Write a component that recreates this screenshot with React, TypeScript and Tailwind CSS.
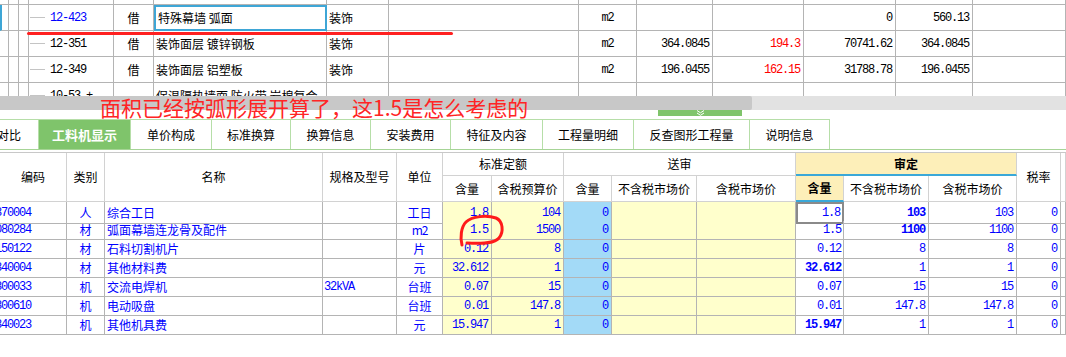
import React from 'react';

const cjk = "font-['Noto_Sans_CJK_SC',sans-serif]";
const mono = "font-['Liberation_Mono','Noto_Sans_CJK_SC',monospace] tracking-[-1.2px]";

const topCols = 'grid-cols-[9px_10px_10px_85px_40px_173px_62px_190px_58px_76px_91px_92px_77px_93px]';
const botCols = 'grid-cols-[67px_38px_218px_74px_46px_49px_72px_48px_85px_99px_48px_85px_88px_44px_5px]';

const tl = 'border-r border-b border-[#b4b4b4]';
const hl = 'border-r border-b border-[#d2d2d2]';

interface TopRowType {
  code?: string;
  blue?: boolean;
  jie?: string;
  name?: string;
  kind?: string;
  unit?: string;
  qty?: string;
  price?: string;
  sum?: string;
  val?: string;
  selected?: boolean;
}

const topRows: TopRowType[] = [
  { code: '12-423', blue: true, jie: '借', name: '特殊幕墙 弧面', kind: '装饰', unit: 'm2', sum: '0', val: '560.13', selected: true },
  { code: '12-351', jie: '借', name: '装饰面层 镀锌钢板', kind: '装饰', unit: 'm2', qty: '364.0845', price: '194.3', sum: '70741.62', val: '364.0845' },
  { code: '12-349', jie: '借', name: '装饰面层 铝塑板', kind: '装饰', unit: 'm2', qty: '196.0455', price: '162.15', sum: '31788.78', val: '196.0455' },
  { code: '10-53 +', jie: '....', name: '保温隔热墙面 防火带 岩棉复合' },
];

function TopRow({ r }: { r: TopRowType }) {
  const num = `${tl} flex items-center justify-end pr-[3px] text-[12px] ${mono}`;
  return (
    <div className={`grid ${topCols} h-[26px] text-black`}>
      <div className={`${tl} ${r.selected ? 'border-l-2 border-l-[#3ea6d6]' : ''}`} />
      <div className={tl} />
      <div className={tl} />
      <div className={`${tl} flex items-center text-[12px] ${mono}`}>
        <span className="ml-px h-px w-[15px] bg-[#c4c4c4]" />
        <span className={`ml-[5px] ${r.blue ? 'text-[#0000ff]' : ''}`}>{r.code}</span>
      </div>
      <div className={`${tl} flex items-center justify-center text-[12px] ${cjk}`}>{r.jie}</div>
      <div
        className={`flex items-center pl-[2px] text-[12px] whitespace-nowrap overflow-hidden ${cjk} ${
          r.selected ? 'border-2 border-[#3ea6d6]' : tl
        }`}
      >
        {r.name}
      </div>
      <div className={`${tl} flex items-center pl-[2px] text-[12px] ${cjk}`}>{r.kind}</div>
      <div className={tl} />
      <div className={`${tl} flex items-center justify-center text-[12px] ${mono}`}>{r.unit}</div>
      <div className={num}>{r.qty}</div>
      <div className={`${num} text-[#ff0000]`}>{r.price}</div>
      <div className={num}>{r.sum}</div>
      <div className={num}>{r.val}</div>
      <div className={tl} />
    </div>
  );
}

const tabs = [
  { label: '对比', w: 'w-[39px]', cut: true },
  { label: '工料机显示', w: 'w-[92px]', active: true },
  { label: '单价构成', w: 'w-[81px]' },
  { label: '标准换算', w: 'w-[79px]' },
  { label: '换算信息', w: 'w-[80px]' },
  { label: '安装费用', w: 'w-[80px]' },
  { label: '特征及内容', w: 'w-[92px]' },
  { label: '工程量明细', w: 'w-[91px]' },
  { label: '反查图形工程量', w: 'w-[116px]' },
  { label: '说明信息', w: 'w-[80px]' },
];

interface ItemType {
  code: string;
  type: string;
  name: string;
  spec?: string;
  unit: string;
  q: string;
  p: string;
  aq: string;
  aqb?: boolean;
  ap: string;
  apb?: boolean;
  at: string;
}

const items: ItemType[] = [
  { code: '370004', type: '人', name: '综合工日', unit: '工日', q: '1.8', p: '104', aq: '1.8', ap: '103', apb: true, at: '103' },
  { code: '080284', type: '材', name: '弧面幕墙连龙骨及配件', unit: 'm2', q: '1.5', p: '1500', aq: '1.5', ap: '1100', apb: true, at: '1100' },
  { code: '150122', type: '材', name: '石料切割机片', unit: '片', q: '0.12', p: '8', aq: '0.12', ap: '8', at: '8' },
  { code: '340004', type: '材', name: '其他材料费', unit: '元', q: '32.612', p: '1', aq: '32.612', aqb: true, ap: '1', at: '1' },
  { code: '300033', type: '机', name: '交流电焊机', spec: '32kVA', unit: '台班', q: '0.07', p: '15', aq: '0.07', ap: '15', at: '15' },
  { code: '300610', type: '机', name: '电动吸盘', unit: '台班', q: '0.01', p: '147.8', aq: '0.01', ap: '147.8', at: '147.8' },
  { code: '340023', type: '机', name: '其他机具费', unit: '元', q: '15.947', p: '1', aq: '15.947', aqb: true, ap: '1', at: '1' },
];

function ItemRow({ it, first }: { it: ItemType; first: boolean }) {
  const num = `${tl} flex items-center justify-end pr-[3px] text-[12px] ${mono}`;
  const center = `${tl} flex items-center justify-center text-[12px] ${cjk}`;
  return (
    <div className={`grid ${botCols} h-[19px] text-[#0000ff]`}>
      <div className={`${tl} flex items-center overflow-hidden text-[12px] ${mono}`}>
        <span className="-ml-[5px]">{it.code}</span>
      </div>
      <div className={center}>{it.type}</div>
      <div className={`${tl} flex items-center pl-[2px] text-[12px] ${cjk}`}>{it.name}</div>
      <div className={`${tl} flex items-center pl-px text-[12px] ${mono}`}>{it.spec}</div>
      <div className={`${center} ${it.unit === 'm2' ? mono : ''}`}>{it.unit}</div>
      <div className={`${num} bg-[#ffffcc]`}>{it.q}</div>
      <div className={`${num} bg-[#ffffcc]`}>{it.p}</div>
      <div className={`${num} bg-[#a3daf7]`}>0</div>
      <div className={`${tl} bg-[#ffffcc]`} />
      <div className={`${tl} bg-[#ffffcc]`} />
      <div
        className={`flex items-center justify-end pr-[2px] text-[12px] ${mono} ${
          first ? 'border-2 border-[#8a8a8a]' : tl
        } ${it.aqb ? 'font-bold' : ''}`}
      >
        {it.aq}
      </div>
      <div className={`${num} ${it.apb ? 'font-bold' : ''}`}>{it.ap}</div>
      <div className={num}>{it.at}</div>
      <div className={num}>0</div>
      <div className={tl} />
    </div>
  );
}

export default function App() {
  const hc = `${hl} flex items-center justify-center text-[12px] text-black ${cjk}`;
  return (
    <div className="relative h-[357px] w-[1066px] overflow-hidden bg-white">
      {/* upper grid */}
      <div className="h-[96px] overflow-hidden">
        <div className={`grid ${topCols} h-[5px]`}>
          {Array.from({ length: 14 }).map((_, i) => (
            <div key={i} className={tl} />
          ))}
        </div>
        {topRows.map((r, i) => (
          <TopRow key={i} r={r} />
        ))}
      </div>

      {/* scrollbar */}
      <div className="flex h-[14px] bg-[#e2e2e2]">
        <div className="w-[752px] rounded-r-[2px] bg-[#c8c8c8]" />
      </div>

      {/* splitter */}
      <div className="flex h-[9px] pl-[658px]">
        <div className="flex h-[6px] w-[84px] items-center justify-center bg-[#7fc46b]">
          <svg width="9" height="6" viewBox="0 0 9 6">
            <path d="M1 0.5 L4.5 2.8 L8 0.5 M1 3 L4.5 5.3 L8 3" stroke="#ffffff" strokeWidth="1" fill="none" />
          </svg>
        </div>
      </div>

      {/* tabs */}
      <div className="flex h-[31px] border-b border-[#a6d496]">
        {tabs.map((t) => (
          <div
            key={t.label}
            className={`${t.w} flex shrink-0 items-center overflow-hidden whitespace-nowrap border-t border-r border-[#b6dea8] ${
              t.cut ? 'justify-end pr-[17px]' : 'justify-center'
            } ${t.active ? 'bg-[#7fc46b] text-[13px] font-bold text-white' : 'text-[12px] text-black'} ${cjk}`}
          >
            <span className="shrink-0">{t.label}</span>
          </div>
        ))}
      </div>

      {/* lower grid */}
      <div className="mt-[2px] border-t border-[#c8c8c8]">
        <div className={`grid ${botCols} grid-rows-[23px_26px]`}>
          <div className={`${hc} row-span-2`}>编码</div>
          <div className={`${hc} row-span-2`}>类别</div>
          <div className={`${hc} row-span-2`}>名称</div>
          <div className={`${hc} row-span-2`}>规格及型号</div>
          <div className={`${hc} row-span-2`}>单位</div>
          <div className={`${hc} col-span-2`}>标准定额</div>
          <div className={`${hc} col-span-3`}>送审</div>
          <div className={`${hc} col-span-3 border-b-2 border-b-[#3aa8d8] bg-[#fdefb9] font-bold`}>审定</div>
          <div className={`${hc} row-span-2`}>税率</div>
          <div className={`${hl} row-span-2`} />
          <div className={hc}>含量</div>
          <div className={hc}>含税预算价</div>
          <div className={hc}>含量</div>
          <div className={hc}>不含税市场价</div>
          <div className={hc}>含税市场价</div>
          <div className={`${hc} border-b-2 border-b-[#3aa8d8] bg-[#fdefb9] font-bold`}>含量</div>
          <div className={hc}>不含税市场价</div>
          <div className={hc}>含税市场价</div>
        </div>
        {items.map((it, i) => (
          <ItemRow key={it.code} it={it} first={i === 0} />
        ))}
      </div>

      {/* red annotations */}
      <div className="absolute left-[27px] top-[32px] h-[3px] w-[426px] rounded-full bg-[#ff2020]" />
      <div className={`absolute left-[100px] top-[97px] whitespace-nowrap text-[21px] leading-none text-[#ff2424] ${cjk}`}>
        面积已经按弧形展开算了，这1.5是怎么考虑的
      </div>
      <svg className="absolute left-[455px] top-[212px]" width="52" height="36" viewBox="0 0 52 36">
        <path
          d="M7 33 C5 26 6 15 11 10 C17 4 32 3 41 6 C48 9 49 20 44 26 C40 31 30 32 12 31"
          stroke="#ff1a1a"
          strokeWidth="3"
          fill="none"
          strokeLinecap="round"
        />
      </svg>
    </div>
  );
}
